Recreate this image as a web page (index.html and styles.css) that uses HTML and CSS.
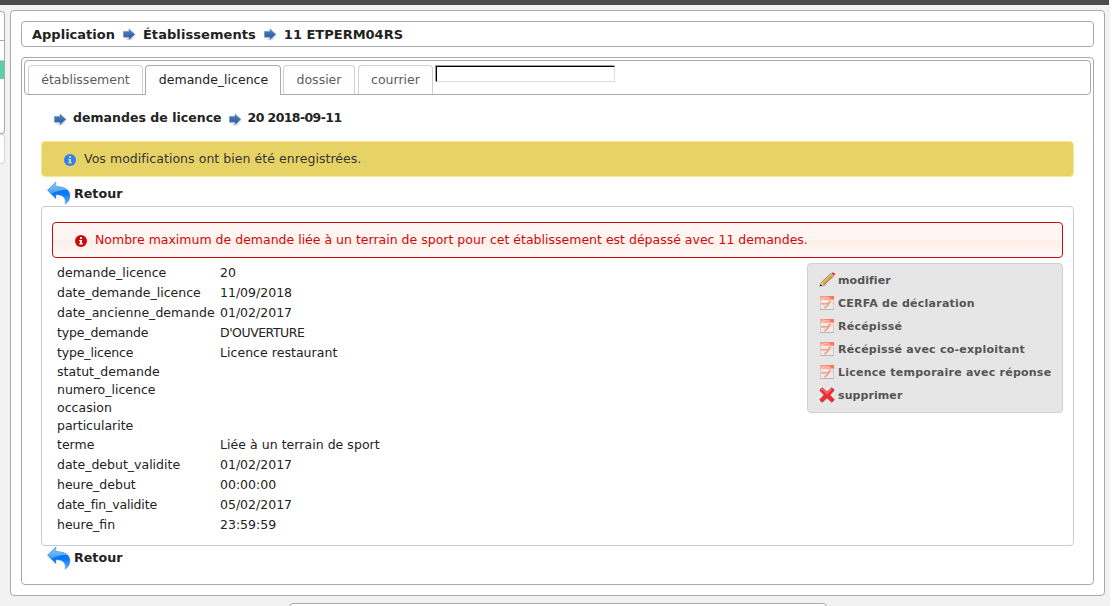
FILE: index.html
```html
<!DOCTYPE html>
<html lang="fr">
<head>
<meta charset="utf-8">
<title>Application</title>
<link rel="stylesheet" href="styles.css">
</head>
<body>
<svg class="defs" width="0" height="0">
  <defs>
    <linearGradient id="arrow-fill" x1="0" y1="0" x2="0" y2="1"><stop offset="0" stop-color="#5484c4"/><stop offset="1" stop-color="#285594"/></linearGradient>
    <linearGradient id="back-light" x1="0" y1="0" x2="0" y2="1"><stop offset="0" stop-color="#93ccfb"/><stop offset="1" stop-color="#459dee"/></linearGradient>
    <linearGradient id="back-dark" x1="0" y1="0" x2="0" y2="1"><stop offset="0" stop-color="#0075fa"/><stop offset=".55" stop-color="#0879f2"/><stop offset="1" stop-color="#68b2ff"/></linearGradient>
    <linearGradient id="pdf-red" x1="0" y1="0" x2="1" y2="0"><stop offset="0" stop-color="#ffa28c"/><stop offset="1" stop-color="#ff6c55"/></linearGradient>
    <linearGradient id="pencil-body" x1="0" y1="0" x2="1" y2="1"><stop offset=".35" stop-color="#f3cd78"/><stop offset=".65" stop-color="#c98a26"/></linearGradient>
  </defs>
  <symbol id="arrow" viewBox="0 0 13 13">
    <path d="M1 11.5L12 8.5L8 12.4Z" fill="#b9c4d6" opacity=".6"/>
    <path d="M.5 3.5H6V1L12 6.4L6 11.5V9.2H.5Z" fill="url(#arrow-fill)" stroke="#6c93c8" stroke-width=".7"/>
  </symbol>
  <symbol id="back" viewBox="0 0 24 24">
    <path d="M.5 9.2L9 .8V5.6C17 5.6 23 8.7 23 14.5C23 18.8 21.3 21.8 17.8 23.2C19.5 18.5 17.2 13.8 9 13.8V18Z" fill="url(#back-dark)"/>
    <path d="M.5 9.2L9 .8V5.6C14 5.6 18 6.6 20.7 9.1C17 8.6 13 9.2 9 10.7L4.5 12.6Z" fill="url(#back-light)"/>
    <path d="M.5 9.2L9 .8V5.6C17 5.6 23 8.7 23 14.5C23 18.8 21.3 21.8 17.8 23.2C19.5 18.5 17.2 13.8 9 13.8V18Z" fill="none" stroke="#4095e8" stroke-width=".4"/>
  </symbol>
  <symbol id="info" viewBox="0 0 12 12">
    <circle cx="6" cy="6" r="6" fill="currentColor"/>
    <path d="M5 2H7V4H5ZM4.2 5H7V8.3H7.8V9.5H4.2V8.3H5V6.2H4.2Z"/>
  </symbol>
  <symbol id="pdf" viewBox="0 0 16 16">
    <path d="M1.5 1.5H14.5V14.5H1.5Z" fill="#eeeae8" stroke="#d2cecc"/>
    <path d="M1 1H15V4.6H1Z" fill="url(#pdf-red)"/>
    <path d="M2.2 8.6Q6 9.6 11.4 7.6M5.4 13Q10 10.5 11.3 4.6" fill="none" stroke="#f79684" stroke-width="1.5"/>
    <path d="M11.5 4.6Q10.6 7.5 14.8 8.2" fill="none" stroke="#ffc0b2" stroke-width="1"/>
    <path d="M2 3.8Q6.5 1.6 11 3.4" fill="none" stroke="#ffe2d9" stroke-width=".9"/>
    <path d="M1 14.5H15" stroke="#b9b5b4"/>
  </symbol>
  <symbol id="pencil" viewBox="0 0 16 16">
    <path d="M2 14.5L8.5 11.5L6 14.5Z" fill="#aaa" opacity=".5"/>
    <path d="M.9 14L2.6 10.1L11.6 1.7L14.3 4.4L5.2 12.8Z" fill="url(#pencil-body)" stroke="#8a6328" stroke-width=".6"/>
    <path d="M1 13.8L2.8 10.3L5 12.5Z" fill="#e4c699"/>
    <path d="M.4 14.6L1.5 12.3L3 13.6Z" fill="#222"/>
    <path d="M11.2 2.4L12.4 1.2L14.8 3.6L13.6 4.9Z" fill="#bbb"/>
    <path d="M12.3 1.3Q13.8 0 15.3 1.1T14.8 3.8Z" fill="#e72b32"/>
  </symbol>
  <symbol id="cross" viewBox="0 0 16 16">
    <path d="M.8 3.2L3.2 .8L8 5.3L12.8 .8L15.2 3.2L10.7 8L15.2 12.8L12.8 15.2L8 10.7L3.2 15.2L.8 12.8L5.3 8Z" fill="#f32c34" stroke="#c8252b" stroke-width=".9" stroke-linejoin="round"/>
    <path d="M2.2 3L3.3 2L8 6.5L12.7 2" fill="none" stroke="#ff969b" stroke-width="1"/>
  </symbol>
</svg>
<div class="page">
  <div class="topbar"></div>
  <div class="workspace">
    <aside class="side">
      <div class="side-head"></div>
      <div class="side-menu"><div class="side-item"></div><div class="side-active"></div></div>
      <div class="side-foot"></div>
    </aside>
    <main class="panel">
      <nav class="crumbs">
        <span>Application</span><svg class="arrow"><use href="#arrow"/></svg><span class="crumb-section">Établissements</span><svg class="arrow"><use href="#arrow"/></svg><span>11 ETPERM04RS</span>
      </nav>
      <section class="tabs">
        <div class="tab-nav">
          <a class="tab tab-etab">établissement</a>
          <a class="tab tab-demande active">demande_licence</a>
          <a class="tab tab-dossier">dossier</a>
          <a class="tab tab-courrier">courrier</a>
          <div class="search"></div>
        </div>
        <div class="content">
          <div class="subcrumbs">
            <svg class="arrow"><use href="#arrow"/></svg><span class="sub-title">demandes de licence</span><svg class="arrow"><use href="#arrow"/></svg><span class="sub-id">20 2018-09-11</span>
          </div>
          <div class="message ok"><svg class="info"><use href="#info"/></svg><span>Vos modifications ont bien été enregistrées.</span></div>
          <a class="back"><svg class="back-icon"><use href="#back"/></svg><span>Retour</span></a>
          <div class="form">
            <div class="message error"><svg class="info"><use href="#info"/></svg><span>Nombre maximum de demande liée à un terrain de sport pour cet établissement est dépassé avec 11 demandes.</span></div>
            <div class="form-body">
              <div class="fields">
                <div class="row"><span>demande_licence</span><span>20</span></div>
                <div class="row"><span>date_demande_licence</span><span>11/09/2018</span></div>
                <div class="row"><span class="loose">date_ancienne_demande</span><span>01/02/2017</span></div>
                <div class="row"><span class="tight">type_demande</span><span class="caps">D'OUVERTURE</span></div>
                <div class="row"><span class="tight">type_licence</span><span class="loose">Licence restaurant</span></div>
                <div class="row empty"><span class="loose">statut_demande</span></div>
                <div class="row empty"><span>numero_licence</span></div>
                <div class="row empty"><span class="loose">occasion</span></div>
                <div class="row empty"><span>particularite</span></div>
                <div class="row"><span>terme</span><span class="loose">Liée à un terrain de sport</span></div>
                <div class="row"><span>date_debut_validite</span><span>01/02/2017</span></div>
                <div class="row"><span>heure_debut</span><span>00:00:00</span></div>
                <div class="row"><span class="tight">date_fin_validite</span><span>05/02/2017</span></div>
                <div class="row"><span>heure_fin</span><span>23:59:59</span></div>
              </div>
              <div class="actions">
                <a class="action"><svg><use href="#pencil"/></svg><span class="action-plain">modifier</span></a>
                <a class="action"><svg><use href="#pdf"/></svg><span>CERFA de déclaration</span></a>
                <a class="action"><svg><use href="#pdf"/></svg><span>Récépissé</span></a>
                <a class="action"><svg><use href="#pdf"/></svg><span>Récépissé avec co-exploitant</span></a>
                <a class="action"><svg><use href="#pdf"/></svg><span>Licence temporaire avec réponse</span></a>
                <a class="action"><svg><use href="#cross"/></svg><span class="action-plain">supprimer</span></a>
              </div>
            </div>
          </div>
          <a class="back"><svg class="back-icon"><use href="#back"/></svg><span>Retour</span></a>
        </div>
      </section>
    </main>
  </div>
  <footer class="footer"></footer>
</div>
</body>
</html>
```
FILE: styles.css
```css
* { box-sizing: border-box; }
body { margin: 0; background: #fff; color: #222; font: 12.5px "DejaVu Sans", sans-serif; overflow: hidden; }
span, a { white-space: nowrap; }
svg { display: block; flex: none; }
.defs { position: absolute; }
.page { width: 1110px; height: 606px; background: #f2f2f2; overflow: hidden; }
.topbar { height: 5px; margin-right: 1px; background: #4b4b4b; }
.workspace { display: flex; height: 591px; }
.side { width: 10px; flex: none; padding-top: 6px; }
.side-head { width: 5px; height: 30px; background: #fff; border: 1px solid #aaa; border-left: 0; border-top-right-radius: 4px; }
.side-menu { width: 5px; height: 93px; padding-top: 19px; background: #fff; border-right: 1px solid #aaa; border-bottom: 1px solid #aaa; border-bottom-right-radius: 4px; }
.side-item { height: 1px; background: #ccc; }
.side-active { height: 18px; background: #58d0aa; }
.side-foot { width: 5px; height: 30px; background: #fff; border: 1px solid #d3d3d3; border-left: 0; border-radius: 0 4px 4px 0; }
.panel { width: 1095px; height: 586px; margin-top: 5px; padding: 10px; background: #fff; border: 1px solid #aaa; border-radius: 4px; }
.crumbs { display: flex; align-items: center; height: 26px; padding-left: 10px; border: 1px solid #aaa; border-radius: 4px; font-size: 13px; font-weight: bold; }
.arrow { width: 13px; height: 13px; }
.crumbs .arrow { margin: 0 7px 0 8px; }
.crumb-section { letter-spacing: .07px; }
.tabs { height: 528px; margin-top: 10px; padding: 2px; border: 1px solid #aaa; border-radius: 4px; }
.tab-nav { display: flex; align-items: flex-start; height: 35px; padding: 4px 0 0 3px; border: 1px solid #aaa; border-radius: 4px; }
.tab { height: 29px; margin-right: 3px; border: 1px solid #d0d0d0; border-bottom: 0; border-radius: 4px 4px 0 0; text-align: center; line-height: 27px; color: #5c5c5c; background: #fff; }
.tab-etab { width: 115px; margin-right: 2px; }
.tab-demande { width: 136px; margin-right: 2px; padding-left: 1px; }
.tab-dossier { width: 72px; }
.tab-courrier { width: 75px; margin-right: 2px; }
.active { height: 30px; border-color: #aaa; color: #222; }
.search { width: 179px; height: 16px; margin: 1px 0 0 1px; border: 1px solid; border-color: #000 #ddd #ddd #000; box-shadow: -1px -1px 0 #999; }
.content { padding: 0 17px; }
.subcrumbs { display: flex; align-items: center; height: 46px; padding-left: 13px; font-weight: bold; }
.subcrumbs span { margin-top: -2px; }
.subcrumbs .arrow { margin: 3px 6px 0 0; }
.subcrumbs .sub-title { letter-spacing: .03px; }
.subcrumbs .sub-title + .arrow { margin-left: 7px; }
.sub-id { letter-spacing: -.6px; }
.message { display: flex; align-items: center; height: 36px; border: 1px solid; border-radius: 4px; }
.message span { margin-top: -2px; }
.info { width: 12px; height: 12px; margin-top: 2px; }
.ok { padding-left: 22px; color: #363636; background: #e6d265; border-color: #f9e98e; }
.ok span { letter-spacing: .05px; }
.ok .info { margin-right: 8px; color: #2b81fa; fill: #e6d265; }
.error { padding-left: 22px; color: #cd0a0a; background: linear-gradient(#fff5f2 0 50%, #fdeee7 52%, #fff8f6 90%); border-color: #cd0a0a; }
.error .info { margin-right: 8px; fill: #fff; }
.back { display: flex; align-items: center; height: 29px; padding-left: 6px; font-size: 12.7px; font-weight: bold; }
.back-icon { width: 24px; height: 24px; margin: 2px 3px 0 0; }
.back span { margin-top: 4px; }
.form { height: 340px; padding: 15px 10px 0; border: 1px solid #ccc; border-radius: 4px; }
.form + .back { height: 23px; }
.form + .back .back-icon { margin-top: 0; }
.form + .back span { margin-top: 0; }
.form-body { display: flex; justify-content: space-between; margin-top: 5px; }
.fields { padding-left: 5px; }
.row { display: grid; grid-template-columns: 163px auto; height: 20px; line-height: 19px; }
.empty { height: 18px; line-height: 17px; }
.caps { letter-spacing: -.48px; }
.tight { letter-spacing: -.15px; }
.loose { letter-spacing: .04px; }
.actions { width: 256px; height: 150px; padding: 4px 0 0 11px; background: #e6e6e6; border: 1px solid #d0d0d0; border-radius: 4px; }
.action { display: flex; align-items: center; gap: 3px; height: 23px; color: #555; font-size: 11px; font-weight: bold; letter-spacing: .24px; }
.action span { margin-top: 2px; }
.action-plain { letter-spacing: .08px; }
.action svg { width: 16px; height: 16px; }
.footer { width: 538px; height: 10px; margin: 7px 0 0 289px; background: #fff; border: 1px solid #aaa; border-radius: 4px; }
```
